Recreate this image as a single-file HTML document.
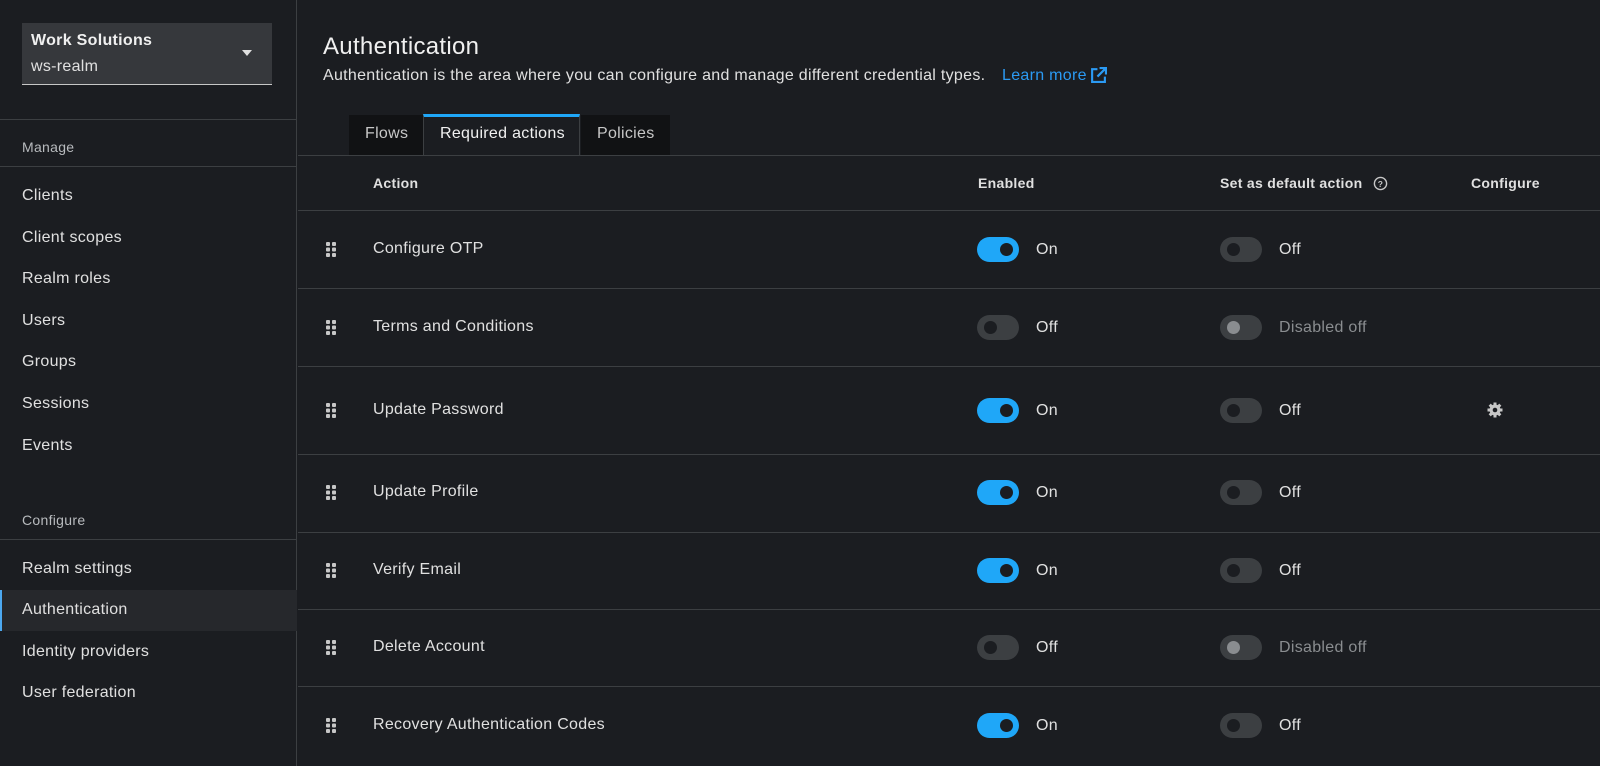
<!DOCTYPE html>
<html><head><meta charset="utf-8"><style>
*{box-sizing:border-box;margin:0;padding:0}
body{width:1600px;height:766px;background:#1b1d21;color:#e0e0e0;font-family:"Liberation Sans",sans-serif;position:relative;overflow:hidden;letter-spacing:0.3px}
.a{position:absolute;white-space:nowrap}
.side{position:absolute;left:0;top:0;width:297px;height:766px;border-right:1px solid #3c3f42}
.hl{position:absolute;left:0;width:297px;height:1px;background:#3c3f42}
.nav{position:absolute;left:22px;font-size:16px;color:#e0e0e0;transform:translateY(-50%)}
.row{position:absolute;left:298px;right:0;height:1px;background:#3c3f42}
.tg{position:absolute;width:42px;height:25px;border-radius:13px}
.tg i{position:absolute;top:6px;width:13px;height:13px;border-radius:50%}
.on{background:#1fa7f8}.on i{left:23px;background:#1b1d21}
.off{background:#3c3f42}.off i{left:7px;background:#1b1d21}
.dis{background:#3c3f42}.dis i{left:7px;background:#8a8d90}
.t{position:absolute;font-size:16px;transform:translateY(-50%)}
</style></head><body>
<div class="side">
 <div class="a" style="left:22px;top:23px;width:250px;height:62px;background:#36383c;border-bottom:1px solid #c7c7c7"></div>
 <div class="a" style="left:31px;top:32px;font-size:16px;font-weight:bold;color:#f0f0f0">Work Solutions</div>
 <div class="a" style="left:31px;top:58px;font-size:16px;color:#e0e0e0">ws-realm</div>
 <div class="a" style="left:242px;top:50px;width:0;height:0;border-left:5px solid transparent;border-right:5px solid transparent;border-top:6px solid #e0e0e0"></div>
 <div class="hl" style="top:119px"></div>
 <div class="nav" style="top:147px;font-size:14px;color:#b8bbbe">Manage</div>
 <div class="hl" style="top:166px"></div>
 <div class="nav" style="top:196px">Clients</div>
 <div class="nav" style="top:238px">Client scopes</div>
 <div class="nav" style="top:279px">Realm roles</div>
 <div class="nav" style="top:321px">Users</div>
 <div class="nav" style="top:362px">Groups</div>
 <div class="nav" style="top:404px">Sessions</div>
 <div class="nav" style="top:446px">Events</div>
 <div class="nav" style="top:520px;font-size:14px;color:#b8bbbe">Configure</div>
 <div class="hl" style="top:539px"></div>
 <div class="nav" style="top:569px">Realm settings</div>
 <div class="a" style="left:0;top:590px;width:297px;height:41px;background:#26282c;border-left:2px solid #4ca8f0"></div>
 <div class="nav" style="top:610px">Authentication</div>
 <div class="nav" style="top:652px">Identity providers</div>
 <div class="nav" style="top:693px">User federation</div>
</div>
<div class="a" style="left:323px;top:33px;font-size:24px;color:#f0f0f0">Authentication</div>
<div class="a" style="left:323px;top:67px;font-size:16px;color:#e0e0e0">Authentication is the area where you can configure and manage different credential types.</div>
<div class="a" style="left:1002px;top:67px;font-size:16px;color:#2b9af3">Learn more</div>
<svg class="a" style="left:1090px;top:67px" width="17" height="17" viewBox="0 0 16 16" fill="none" stroke="#2b9af3" stroke-width="2"><path d="M7 2H2v12h12V9"/><path d="M9 1h6v6M15 1L7 9"/></svg>
<div class="a" style="left:349px;top:115px;width:74px;height:40px;background:#111214"></div>
<div class="a" style="left:365px;top:125px;font-size:16px;color:#c7c7c7">Flows</div>
<div class="a" style="left:423px;top:114px;width:157px;height:42px;background:#1b1d21;border-top:3px solid #1fa7f8;border-left:1px solid #3c3f42;border-right:1px solid #3c3f42"></div>
<div class="a" style="left:440px;top:125px;font-size:16px;color:#f0f0f0">Required actions</div>
<div class="a" style="left:581px;top:115px;width:89px;height:40px;background:#111214"></div>
<div class="a" style="left:597px;top:125px;font-size:16px;color:#c7c7c7">Policies</div>
<div class="row" style="top:155px"></div>
<div class="t" style="left:373px;top:183px;font-size:14px;font-weight:bold">Action</div>
<div class="t" style="left:978px;top:183px;font-size:14px;font-weight:bold">Enabled</div>
<div class="t" style="left:1220px;top:183px;font-size:14px;font-weight:bold">Set as default action</div>
<svg class="a" style="left:1373px;top:176px" width="15" height="15" viewBox="0 0 16 16"><circle cx="8" cy="8" r="6.5" fill="none" stroke="#c7c7c7" stroke-width="1.5"/><text x="8" y="11.5" font-size="9" font-weight="bold" fill="#c7c7c7" text-anchor="middle" font-family="Liberation Sans">?</text></svg>
<div class="t" style="left:1471px;top:183px;font-size:14px;font-weight:bold">Configure</div>
<div class="row" style="top:210px"></div>
<div class="row" style="top:288px"></div>
<div class="row" style="top:366px"></div>
<div class="row" style="top:454px"></div>
<div class="row" style="top:532px"></div>
<div class="row" style="top:609px"></div>
<div class="row" style="top:686px"></div>
<div id="rows"></div>
<svg class="a" style="left:1487px;top:402px" width="16" height="16" viewBox="0 0 16 16"><g fill="#c7c7c7"><circle cx="8" cy="8" r="5.5"/><rect x="6.5" y="0.5" width="3" height="15"/><rect x="0.5" y="6.5" width="15" height="3"/><rect x="6.5" y="0.5" width="3" height="15" transform="rotate(45 8 8)"/><rect x="6.5" y="0.5" width="3" height="15" transform="rotate(-45 8 8)"/></g><circle cx="8" cy="8" r="2.3" fill="#1b1d21"/></svg>
<script>
var d=[["Configure OTP",249,"on","off"],["Terms and Conditions",327,"off","dis"],["Update Password",410,"on","off"],["Update Profile",492,"on","off"],["Verify Email",570,"on","off"],["Delete Account",647,"off","dis"],["Recovery Authentication Codes",725,"on","off"]];
var h="";
d.forEach(function(r){var y=r[1];
h+='<svg class="a" style="left:326px;top:'+(y-7)+'px" width="11" height="15"><g fill="#c7c7c7"><rect x="0" y="0" width="4" height="4" rx="1"/><rect x="6" y="0" width="4" height="4" rx="1"/><rect x="0" y="5.5" width="4" height="4" rx="1"/><rect x="6" y="5.5" width="4" height="4" rx="1"/><rect x="0" y="11" width="4" height="4" rx="1"/><rect x="6" y="11" width="4" height="4" rx="1"/></g></svg>';
h+='<div class="t" style="left:373px;top:'+y+'px">'+r[0]+'</div>';
h+='<div class="tg '+r[2]+'" style="left:977px;top:'+(y-12)+'px"><i></i></div>';
h+='<div class="t" style="left:1036px;top:'+(y+1)+'px">'+(r[2]=="on"?"On":"Off")+'</div>';
h+='<div class="tg '+r[3]+'" style="left:1220px;top:'+(y-12)+'px"><i></i></div>';
h+='<div class="t" style="left:1279px;top:'+(y+1)+'px;color:'+(r[3]=="dis"?"#8a8d90":"#e0e0e0")+'">'+(r[3]=="dis"?"Disabled off":"Off")+'</div>';
});
document.getElementById("rows").innerHTML=h;
</script>
</body></html>
